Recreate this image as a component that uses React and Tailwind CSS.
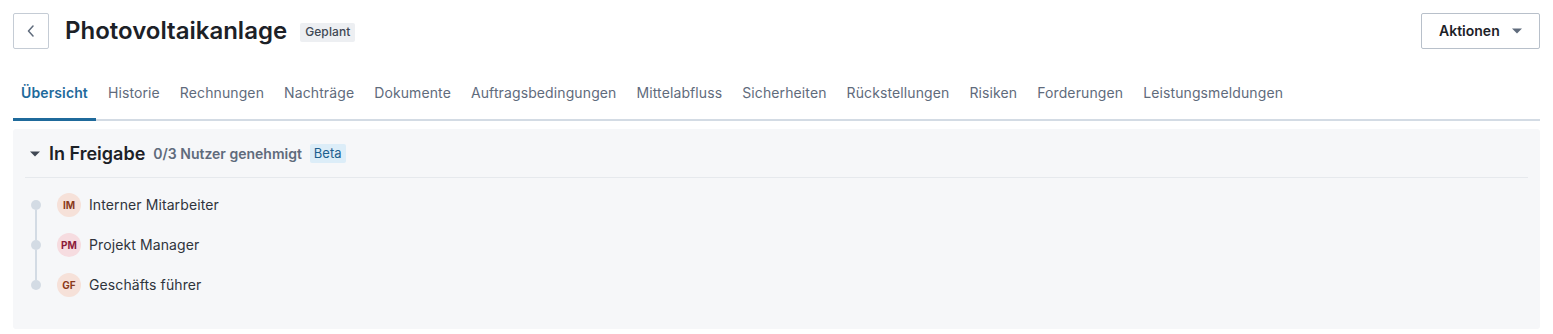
import React from 'react';

const tabs = [
  'Übersicht',
  'Historie',
  'Rechnungen',
  'Nachträge',
  'Dokumente',
  'Auftragsbedingungen',
  'Mittelabfluss',
  'Sicherheiten',
  'Rückstellungen',
  'Risiken',
  'Forderungen',
  'Leistungsmeldungen',
];

const approvers = [
  { initials: 'IM', name: 'Interner Mitarbeiter', avatar: 'bg-[#f6e1d9] text-[#8b3a1c]' },
  { initials: 'PM', name: 'Projekt Manager', avatar: 'bg-[#f6dce0] text-[#8c1b3a]' },
  { initials: 'GF', name: 'Geschäfts führer', avatar: 'bg-[#f6e1d9] text-[#8b3a1c]' },
];

function Header() {
  return (
    <div className="flex items-center justify-between h-9">
      <div className="flex items-center">
        <button className="w-9 h-9 flex items-center justify-center border border-[#c5ccd5] rounded-[2px] bg-white">
          <svg width="8" height="12" viewBox="0 0 8 12" fill="none">
            <path d="M6 1L1.5 6L6 11" stroke="#5f6b7c" strokeWidth="1.5" strokeLinecap="round" strokeLinejoin="round" />
          </svg>
        </button>
        <h1 className="ml-4 text-[24px] leading-8 font-semibold text-[#1c2127]">
          Photovoltaikanlage
        </h1>
        <span className="ml-[13px] mt-[2px] px-[5px] h-[19px] flex items-center rounded-[2px] bg-[#edeff2] text-[12px] font-medium text-[#404854] tracking-[0.1px]">
          Geplant
        </span>
      </div>
      <button className="h-9 w-[119px] flex items-center justify-between pl-[17px] pr-[17px] border border-[#b8c0ca] rounded-[2px] bg-white text-sm font-semibold text-[#1c2127]">
        Aktionen
        <svg width="10" height="6" viewBox="0 0 10 6">
          <path d="M0 0.5H10L5 5.5Z" fill="#5f6b7c" />
        </svg>
      </button>
    </div>
  );
}

function Tabs() {
  return (
    <div className="mt-[23px] flex gap-1 border-b-2 border-[#d3dbe4]">
      {tabs.map((t, i) => (
        <div
          key={t}
          className={
            i === 0
              ? 'px-2 pt-[11px] pb-[15px] -mb-[2px] leading-5 text-sm tracking-[0.11px] font-semibold text-[#1f6a9b] border-b-[3px] border-[#1f6a9b]'
              : 'px-2 pt-[11px] pb-[15px] -mb-[2px] leading-5 text-sm tracking-[0.11px] text-[#5f6b7c] border-b-[3px] border-transparent'
          }
        >
          {t}
        </div>
      ))}
    </div>
  );
}

function ApproverRow({ item, index, total }) {
  return (
    <div className="flex items-stretch h-10 pl-[6px]">
      <div className="w-[10px] flex flex-col items-center">
        <div className={index === 0 ? 'flex-1 w-[2px]' : 'flex-1 w-[2px] bg-[#d3dbe4]'} />
        <div className="w-[10px] h-[10px] rounded-full bg-[#d3dbe4]" />
        <div className={index === total - 1 ? 'flex-1 w-[2px]' : 'flex-1 w-[2px] bg-[#d3dbe4]'} />
      </div>
      <div className="ml-4 flex items-center">
        <div className={`w-6 h-6 rounded-full flex items-center justify-center text-[10px] font-bold ${item.avatar}`}>
          {item.initials}
        </div>
        <span className="ml-2 text-sm tracking-[0.1px] text-[#2f343c]">{item.name}</span>
      </div>
    </div>
  );
}

function ApprovalPanel() {
  return (
    <div className="mt-2 h-[200px] rounded-[3px] bg-[#f6f7f9] px-3">
      <div className="flex items-center h-[49px] pt-[1px] border-b border-[#e6e9ed]">
        <svg className="ml-[5px]" width="10" height="6" viewBox="0 0 10 6">
          <path d="M0 0.5H10L5 5.5Z" fill="#404854" />
        </svg>
        <span className="ml-[9px] text-[18px] font-semibold text-[#1c2127]">In Freigabe</span>
        <span className="ml-[8px] text-sm font-semibold text-[#5f6b7c]">0/3 Nutzer genehmigt</span>
        <span className="ml-[8px] px-[4px] h-[19px] flex items-center rounded-[2px] bg-[#dcedf8] text-[13px] text-[#1d5f8e]">
          Beta
        </span>
      </div>
      <div className="mt-[7px]">
        {approvers.map((a, i) => (
          <ApproverRow key={a.initials} item={a} index={i} total={approvers.length} />
        ))}
      </div>
    </div>
  );
}

export default function App() {
  return (
    <div className="min-h-screen bg-white px-[13px] pt-[13px] font-['Inter',sans-serif]">
      <Header />
      <Tabs />
      <ApprovalPanel />
    </div>
  );
}
